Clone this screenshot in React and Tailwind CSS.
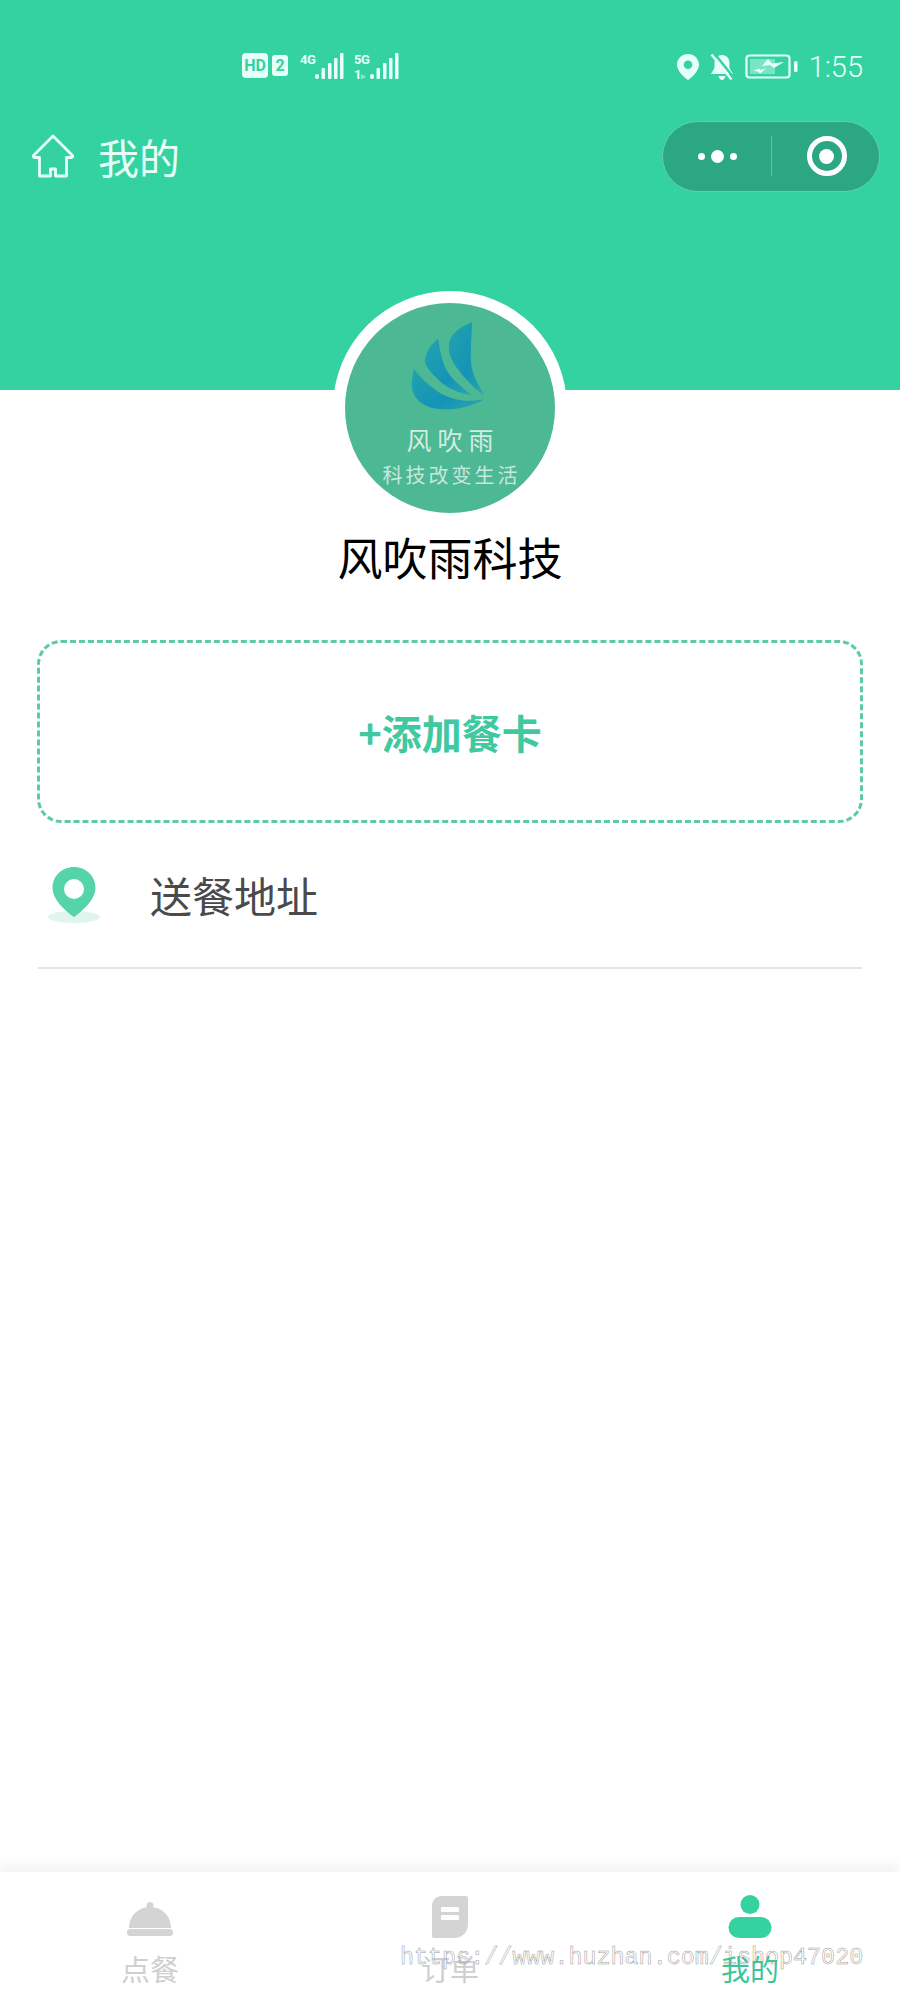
const cjk = { fontFamily: '"Noto Sans CJK SC", "Noto Sans", sans-serif' }

function Bars({ className = "" }) {
  return (
    <svg width="29" height="26" viewBox="0 0 29 26" className={className} fill="#e6fff8">
      <rect x="0" y="21" width="4" height="5" rx="2" />
      <rect x="6.500" y="15" width="3.500" height="11" rx="1" />
      <rect x="13" y="10" width="3.500" height="16" rx="1" />
      <rect x="19" y="5" width="3.500" height="21" rx="1" />
      <rect x="25" y="0" width="3.500" height="26" rx="1" />
    </svg>
  )
}

function StatusLeft() {
  return (
    <div className="flex items-start text-[#e6fff8]" style={{ fontFamily: '"Roboto", sans-serif' }}>
      <div className="w-[26px] h-[25px] bg-[#e6fff8] rounded-[4px] text-[#34d3a1] text-[16px] font-bold leading-[25px] text-center">HD</div>
      <div className="w-[16px] h-[21px] mt-[2px] ml-[4px] bg-[#e6fff8] rounded-[3px] text-[#34d3a1] text-[16px] font-bold leading-[21px] text-center">2</div>
      <div className="ml-[12px] -mr-[2px] w-[17px] text-[13px] font-bold leading-[14px] tracking-[-0.5px]">4G</div>
      <Bars />
      <div className="ml-[10px] w-[20px] text-[13px] font-bold leading-[14px] tracking-[-0.5px]">
        <div>5G</div>
        <div className="mt-[1px]">1<span className="opacity-50 text-[9px]">▸</span></div>
      </div>
      <Bars className="-ml-[4px]" />
    </div>
  )
}

function StatusRight() {
  return (
    <div className="flex items-center text-[#e6fff8]">
      <svg width="22" height="26" viewBox="0 0 22 26" fill="#e6fff8">
        <path fillRule="evenodd" d="M11 0C5 0 0 4.700 0 10.700C0 16.500 6 22.500 11 26C16 22.500 22 16.500 22 10.700C22 4.700 17 0 11 0ZM11 6.500A4.300 4.300 0 1 1 11 15.100A4.300 4.300 0 1 1 11 6.500Z" />
      </svg>
      <svg width="26" height="28" viewBox="0 0 26 28" className="ml-[10px]" fill="#e6fff8">
        <path d="M13 2C8 2 5.500 6 5.500 10L5.500 15L2 21L24 21L20.500 15L20.500 10C20.500 6 18 2 13 2Z" />
        <path d="M9.500 23L16.500 23C16 25.500 14.500 27 13 27C11.500 27 10 25.500 9.500 23Z" />
        <path d="M5 0L25 25" stroke="#34d3a1" strokeWidth="2.500" />
        <path d="M2.500 1.500L22.500 26.500" stroke="#e6fff8" strokeWidth="2.500" />
      </svg>
      <svg width="54" height="26" viewBox="0 0 54 26" className="ml-[10px]">
        <rect x="1.500" y="1.500" width="43" height="22" rx="3" fill="none" stroke="#e6fff8" strokeWidth="2.200" />
        <rect x="5" y="5" width="25" height="15" fill="#e6fff8" opacity="0.4" />
        <path d="M23 5L27 9.500L39 8L29 14L25 11L17 12Z" fill="#e6fff8" />
        <path d="M8 17L14 14.500L15.500 16L21 14.500L15 19.500L13 17.500Z" fill="#e6fff8" />
        <rect x="49" y="7" width="3.500" height="11" rx="1.500" fill="#e6fff8" />
      </svg>
      <span className="ml-[10px] text-[29px] leading-[28px] font-light" style={{ fontFamily: '"Roboto", sans-serif' }}>1:55</span>
    </div>
  )
}

function Logo() {
  return (
    <svg width="100" height="110" viewBox="0 0 100 110">
      <defs>
        <linearGradient id="blade" x1="0" y1="0" x2="1" y2="1">
          <stop offset="0" stopColor="#22a3ad" />
          <stop offset="0.6" stopColor="#1593b8" />
          <stop offset="1" stopColor="#2aa8aa" />
        </linearGradient>
      </defs>
      <path fill="url(#blade)" d="M72 10C60 15 50 22 49 32C48 42 52 50 60 60C68 70 76 78 84 83C78 72 72 62 71 50C70 38 72 22 72 10Z" />
      <path fill="url(#blade)" d="M38 27C30 33 25 42 25 50C27 57 33 63 42 71C50 77 58 81 72 83C60 74 50 66 45 55C41 46 40 36 38 27Z" />
      <path fill="url(#blade)" d="M14 57C12 65 11 73 13 80C16 88 22 93 32 96C45 99 65 98 85 87C68 91 52 88 40 81C29 74 20 65 14 57Z" />
    </svg>
  )
}

function Bell({ className = "" }) {
  return (
    <svg width="48" height="37" viewBox="0 0 48 37" className={className} fill="#d4d4d4">
      <circle cx="24" cy="4.500" r="3.500" />
      <path d="M3 27C3 15 12 6 24 6C36 6 45 15 45 27Z" />
      <rect x="1" y="28" width="46" height="7" rx="3.500" />
    </svg>
  )
}

function Order() {
  return (
    <svg width="36" height="42" viewBox="0 0 36 42">
      <path fill="#d4d4d4" d="M10 0L34 0C35 0 36 1 36 2L36 28C36 36 30 42 22 42L2 42C1 42 0 41 0 40L0 10C0 4 4 0 10 0Z" />
      <rect x="9" y="11" width="18" height="5" rx="1" fill="#fff" />
      <rect x="9" y="19" width="18" height="5" rx="1" fill="#fff" />
    </svg>
  )
}

function Person() {
  return (
    <svg width="44" height="43" viewBox="0 0 44 43" fill="#33d2a0">
      <circle cx="22" cy="9.500" r="9.500" />
      <rect x="0.500" y="22" width="43" height="21" rx="10.500" />
    </svg>
  )
}

export default function App() {
  const tabs = [
    { label: "点餐", icon: <Bell />, color: "text-[#cfcfcf]" },
    { label: "订单", icon: <Order />, color: "text-[#cfcfcf]" },
    { label: "我的", icon: <Person />, color: "text-[#3cc49a]" },
  ]

  return (
    <div className="relative h-[2000px] w-full overflow-hidden bg-white flex flex-col" style={cjk}>
      {/* Header */}
      <div className="h-[390px] shrink-0 bg-[#34d2a1]">
        <div className="flex items-start justify-between pt-[53px] pl-[242px] pr-[37px] h-[80px]">
          <StatusLeft />
          <StatusRight />
        </div>
        <div className="flex items-center justify-between mt-[41px] h-[70px] pl-[31px] pr-[20px]">
          <div className="flex items-center">
            <svg width="44" height="44" viewBox="0 0 44 44" fill="none" stroke="#e6fff8" strokeWidth="2.800" strokeLinejoin="round">
              <path d="M22 2L2.500 21.500C2 22.500 2.500 23.500 3.500 23.500L8.500 23.500L8.500 42L19.500 42L19.500 35L24.500 35L24.500 42L35.500 42L35.500 23.500L40.500 23.500C41.500 23.500 42 22.500 41.500 21.500Z" />
            </svg>
            <span className="ml-[23px] text-[41px] leading-none text-[#e6fff8]">我的</span>
          </div>
          <div className="flex items-center w-[218px] h-[71px] rounded-full bg-[#2ba883] border border-[#5ed0ad]">
            <div className="w-[108px] flex items-center justify-center gap-[6px]">
              <span className="w-[7px] h-[7px] rounded-full bg-white" />
              <span className="w-[13px] h-[13px] rounded-full bg-white" />
              <span className="w-[7px] h-[7px] rounded-full bg-white" />
            </div>
            <div className="w-px h-[40px] bg-[#5ec4a6]" />
            <div className="flex-1 flex items-center justify-center pl-[2px]">
              <div className="w-[40px] h-[40px] rounded-full border-[5px] border-white flex items-center justify-center">
                <div className="w-[15px] h-[15px] rounded-full bg-white" />
              </div>
            </div>
          </div>
        </div>
      </div>

      {/* Main */}
      <div className="flex-1 flex flex-col">
        <div className="self-center -mt-[99px] w-[234px] h-[234px] rounded-full bg-white p-[12px]">
          <div className="w-[210px] h-[210px] rounded-full bg-[#4db894] flex flex-col items-center overflow-hidden pt-[9px]">
            <Logo />
            <div className="mt-[1px] text-[25px] leading-[32px] tracking-[6px] pl-[6px] text-white/75">风吹雨</div>
            <div className="mt-[7px] text-[20px] leading-[26px] tracking-[3px] pl-[3px] text-white/70 whitespace-nowrap">科技改变生活</div>
          </div>
        </div>
        <div className="text-center text-[45px] leading-[64px] text-black">风吹雨科技</div>

        <div className="mt-[51px] mx-[37px] h-[183px] rounded-[24px] border-[3px] border-dashed border-[#5cc9ab] flex items-center justify-center text-[40px] font-bold text-[#40c9a0]">
          +添加餐卡
        </div>

        <div className="mx-[38px] h-[146px] flex items-center border-b-2 border-[#e5e5e5]">
          <svg width="52" height="56" viewBox="0 0 52 56" className="ml-[10px]">
            <ellipse cx="26" cy="50" rx="26" ry="6" fill="#dff5ee" />
            <path fillRule="evenodd" fill="#56d4a9" d="M26 0C14 0 4.500 9 4.500 21C4.500 32 17 44 26 50C35 44 47.500 32 47.500 21C47.500 9 38 0 26 0ZM26 12A10 10 0 1 1 26 32A10 10 0 1 1 26 12Z" />
          </svg>
          <span className="ml-[50px] text-[42px] leading-none text-[#4a4a4a]">送餐地址</span>
        </div>
      </div>

      {/* Tab bar */}
      <div className="h-[128px] shrink-0 bg-white grid grid-cols-3 shadow-[0_-8px_12px_rgba(0,0,0,0.05)]">
        {tabs.map((tab) => (
          <div key={tab.label} className="flex flex-col items-center">
            <div className="h-[42px] mt-[24px] flex items-end">{tab.icon}</div>
            <span className={`mt-[12px] text-[29px] leading-[36px] ${tab.color}`}>{tab.label}</span>
          </div>
        ))}
      </div>

      {/* Watermark */}
      <div
        className="absolute left-[400px] top-[1944px] text-[23.400px] leading-[28px] text-transparent whitespace-nowrap [-webkit-text-stroke:0.5px_#9a9a9a]"
        style={{ fontFamily: '"Liberation Mono", monospace' }}
      >
        https://www.huzhan.com/ishop47020
      </div>
    </div>
  )
}
